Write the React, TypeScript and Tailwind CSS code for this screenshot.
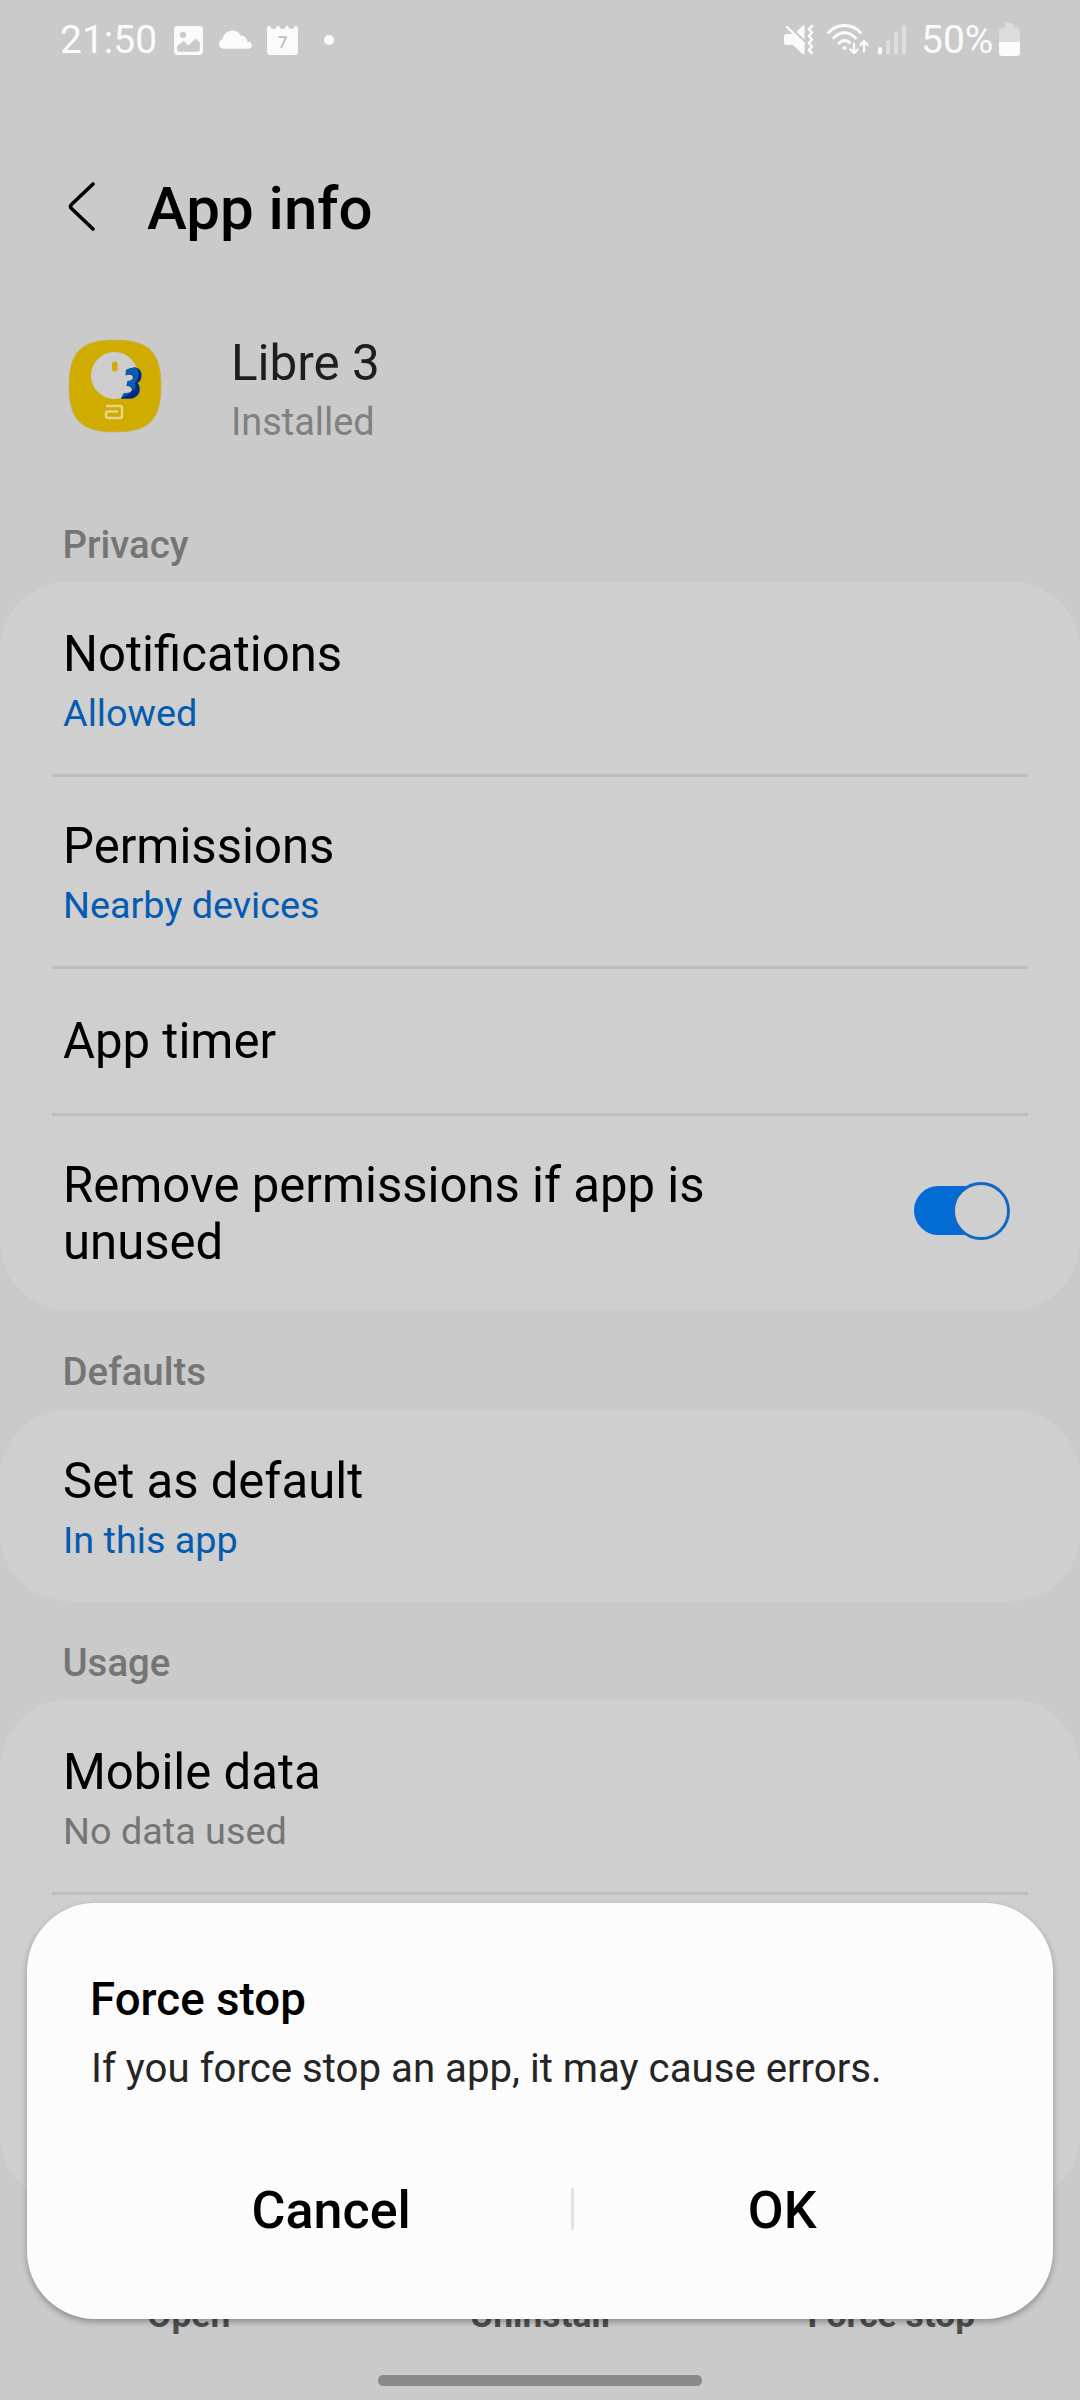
import type { ReactNode } from "react";

function StatusBar() {
  return (
    <div className="flex h-20 items-start text-[39px] leading-[46px] text-[#fbfbfb]">
      <span className="mt-[17px] w-[114px] pl-[60px]">21:50</span>
      <svg className="ml-[60px] mt-[26px] h-[29px] w-[29px] shrink-0" viewBox="0 0 29 29" fill="#fbfbfb">
        <path
          fillRule="evenodd"
          d="M4 0H25a4 4 0 0 1 4 4V25a4 4 0 0 1-4 4H4a4 4 0 0 1-4-4V4a4 4 0 0 1 4-4ZM3.2 20V24a1.8 1.8 0 0 0 1.8 1.8H24a1.8 1.8 0 0 0 1.8-1.8V16.500L21.500 12.500L14.500 19.500L9.500 15Z M9 5.700a3.200 3.200 0 1 0 .01 0Z"
        />
      </svg>
      <svg className="ml-[15px] mt-[30px] h-[19px] w-[35px] shrink-0" viewBox="0 0 35 19" fill="#fbfbfb">
        <path d="M5.500 18.700A5 5 0 0 1 4.700 8.900A9.700 9.700 0 0 1 22.800 5.500Q28.500 5.500 29.800 12A3.400 3.400 0 0 1 31 18.700Z" />
      </svg>
      <svg className="ml-[14px] mt-[25px] h-[30px] w-[31px] shrink-0" viewBox="0 0 31 30">
        <path
          fill="#fbfbfb"
          d="M0 3Q0 1 2 1H3Q4 4 6.500 4Q9 4 10 1H12Q13 4 15.500 4Q18 4 19 1H21Q22 4 24.500 4Q27 4 28 1H29Q31 1 31 3V27Q31 30 28 30H3Q0 30 0 27Z"
        />
        <path d="M11.500 12.200H19L14 23" fill="none" stroke="#bdbdbd" strokeWidth="1.800" />
      </svg>
      <span className="ml-[26px] mt-[35px] h-[10px] w-[10px] shrink-0 rounded-full bg-[#fbfbfb]" />

      <svg className="ml-[450px] mt-[24px] h-[31px] w-[30px] shrink-0" viewBox="0 0 30 31" fill="#fbfbfb">
        <path d="M0 12.500Q0 10 2.500 10H8.500L20.500 20V29.500Q19 30.500 17.500 29L9 21H2.500Q0 21 0 18.500Z" />
        <path d="M12.500 8L19 1.500Q20.500 0.500 20.500 2.500V15.500Z" />
        <path d="M3 3L20 19.500" stroke="#fbfbfb" strokeWidth="2.400" strokeLinecap="round" />
        <path
          d="M28 2L24.800 5.200L28 8.500L24.800 12L28 15.500L24.800 19L28 22.500L24.800 26L28 29"
          fill="none"
          stroke="#fbfbfb"
          strokeWidth="2.500"
          strokeLinecap="round"
          strokeLinejoin="round"
        />
      </svg>
      <svg
        className="ml-[13px] mt-[23px] h-8 w-[42px] shrink-0"
        viewBox="0 0 42 32"
        fill="none"
        stroke="#fbfbfb"
        strokeWidth="3"
        strokeLinecap="round"
        strokeLinejoin="round"
      >
        <path d="M1.700 9.500Q8 2.500 17.500 2.500T33.500 9.500" />
        <path d="M6.700 15Q11.500 9.800 17.500 9.800T28.500 15" />
        <path d="M12 20.500Q14 17.500 17.500 17.500Q20.500 17.500 22.500 19.500" />
        <circle cx="17.500" cy="25" r="2" fill="#fbfbfb" stroke="none" />
        <path d="M27 21V30M23.300 26.500L27 30.200L30.700 26.500M37 28.500V18.500M33.300 22L37 18.300L40.700 22" strokeWidth="2.300" />
      </svg>
      <svg className="ml-[9px] mt-[25px] h-[30px] w-7 shrink-0" viewBox="0 0 28 30">
        <rect y="22" width="4" height="7.500" rx="1.800" fill="#fbfbfb" />
        <rect x="8" y="15" width="4" height="14.500" rx="1.800" fill="#dedede" />
        <rect x="16" y="7" width="4" height="22.500" rx="1.800" fill="#dedede" />
        <rect x="24" y="0" width="4" height="29.500" rx="1.800" fill="#dedede" />
      </svg>
      <span className="ml-[15px] mt-[17px] w-[74px]">50%</span>
      <svg className="ml-[4px] mt-[23px] h-[33px] w-[21px] shrink-0" viewBox="0 0 21 33">
        <path d="M6 4V1.500Q6 0 7.500 0H13.500Q15 0 15 1.500V4Q21 5 21 8V19H0V8Q0 5 6 4Z" fill="#dcdcdc" />
        <path d="M0 19H21V29.500Q21 33 17.500 33H3.500Q0 33 0 29.500Z" fill="#fcfcfc" />
      </svg>
    </div>
  );
}

function LibreIcon() {
  return (
    <svg className="h-[94px] w-[94px] shrink-0" viewBox="0 0 94 94">
      <path
        d="M47 1C81 1 93 13 93 47S81 93 47 93S1 81 1 47S13 1 47 1Z"
        fill="#d0ab00"
        stroke="#c5b15a"
        strokeWidth="0.800"
      />
      <circle cx="46.500" cy="36.500" r="23.500" fill="#cdcdcd" />
      <rect x="44" y="22.500" width="5.500" height="10" rx="2.700" fill="#d0ab00" />
      <path
        d="M58 31Q63 28 67.500 28.500Q74 30 73.500 37Q73 42.500 69.500 44Q72.500 47 71.500 53Q69 60 60 59.800H53L56 54Z"
        fill="#002c7c"
      />
      <path
        d="M58 31Q63 28 67.500 28.500Q71 30 70.500 36Q70 42 66.500 44.500Q69.500 47 66 51Q60 56.500 53 59L56 54Q64 54.500 65 50.500Q65 47.500 59 47.500L60 41.500Q65.500 41 65.800 37.500Q65.500 34 58 36.500Z"
        fill="#0a5cad"
      />
      <path
        d="M56 54Q63.500 54.500 64 50.500Q63.500 47 58.500 47L59.500 42Q65 41.500 65 38Q64.500 34.500 57 36.500L50 46Z"
        fill="#cdcdcd"
      />
      <path
        d="M38 67H52Q54 67 54 69V77Q54 79 52 79H40Q38 79 38 77V74.500Q38 72.500 40 72.500H50"
        fill="none"
        stroke="#e6d48a"
        strokeWidth="2.500"
      />
    </svg>
  );
}

function Section({ title, children }: { title: string; children: ReactNode }) {
  return (
    <section>
      <h2 className="pb-[15px] pl-[62.5px] pt-10 text-[38.4px] font-medium leading-[44px] text-[#757575]">{title}</h2>
      <div className="rounded-[68px] bg-[#cfcfcf]">{children}</div>
    </section>
  );
}

function Row({ title, sub, subClass }: { title: string; sub: string; subClass: string }) {
  return (
    <div className="h-48 pl-[63px] pt-[43px]">
      <p className="text-[49.1px] leading-[58px] text-black">{title}</p>
      <p className={`mt-[8px] text-[37.8px] leading-[44px] ${subClass}`}>{sub}</p>
    </div>
  );
}

function Divider() {
  return <div className="mx-[52px] -mb-[3px] h-[3px] bg-[#bdbdbd]" />;
}

function Toggle() {
  return (
    <svg className="-mt-[7px] h-[60px] w-[98px]" viewBox="0 0 98 60">
      <rect x="1" y="5" width="80" height="49" rx="24.500" fill="#036bd4" />
      <circle cx="68" cy="30" r="27.500" fill="#cfcfcf" stroke="#1169c6" strokeWidth="3" />
    </svg>
  );
}

function ForceStopDialog() {
  return (
    <div
      role="dialog"
      className="absolute left-[27px] top-[1903px] h-[416px] w-[1026px] rounded-[68px] bg-[#fcfcfc] px-[63px] pt-[70px] shadow-[0_3px_6px_rgba(0,0,0,0.3)]"
    >
      <h3 className="text-[45.7px] font-medium leading-[54px] text-black">Force stop</h3>
      <p className="mt-[18px] pl-px text-[40.2px] leading-[48px] text-[#252525]">
        If you force stop an app, it may cause errors.
      </p>
      <div className="mt-[80px] flex h-[76px] items-center pl-px text-[52px] font-medium leading-[60px] text-black">
        <button className="w-[482px]">Cancel</button>
        <span className="-mt-[5px] h-[42px] w-[3px] bg-[#e4e4e4]" />
        <button className="w-[417px]">OK</button>
      </div>
    </div>
  );
}

export default function App() {
  const blue = "text-[#045bb0]";
  return (
    <div className="relative flex h-[2400px] w-[1080px] flex-col overflow-hidden bg-[#cacaca] font-[Roboto,sans-serif]">
      <StatusBar />
      <header className="flex h-[254px] items-start pt-[93px]">
        <svg
          className="ml-[68px] mt-[7px] h-[54px] w-8 shrink-0"
          viewBox="0 0 32 54"
          fill="none"
          stroke="#000"
          strokeWidth="3.600"
          strokeLinecap="round"
          strokeLinejoin="round"
        >
          <path d="M25 4L3.500 24.500Q1.500 26.500 3.500 28.500L25 49" />
        </svg>
        <h1 className="ml-[47px] text-[60px] font-medium leading-[72px] text-black">App info</h1>
      </header>
      <div className="flex h-[149px] items-start pl-[68px]">
        <span className="mt-[5px]">
          <LibreIcon />
        </span>
        <div className="ml-[69px]">
          <p className="text-[49.4px] leading-[58px] text-[#1e1e1e]">Libre 3</p>
          <p className="mt-[8px] text-[37.9px] leading-[44px] text-[#808080]">Installed</p>
        </div>
      </div>

      <Section title="Privacy">
        <Row title="Notifications" sub="Allowed" subClass={blue} />
        <Divider />
        <Row title="Permissions" sub="Nearby devices" subClass={blue} />
        <Divider />
        <div className="flex h-[147px] items-center pl-[63px] pt-[3px] text-[49.1px] leading-[58px] text-black">
          App timer
        </div>
        <Divider />
        <div className="flex h-[197px] items-center justify-between pl-[63px] pr-[69px] pt-[5px]">
          <p className="w-[700px] text-[49.1px] leading-[57px] text-black">Remove permissions if app is unused</p>
          <Toggle />
        </div>
      </Section>
      <Section title="Defaults">
        <Row title="Set as default" sub="In this app" subClass={blue} />
      </Section>
      <Section title="Usage">
        <Row title="Mobile data" sub="No data used" subClass="text-[#757575]" />
        <Divider />
        <div className="h-[311px]" />
      </Section>

      <nav className="mt-[90px] flex h-11 shrink-0 px-[13px] text-center text-[35.4px] font-bold leading-[44px] text-[#4f4f4f]">
        <span className="flex-1">Open</span>
        <span className="flex-1">Uninstall</span>
        <span className="flex-1">Force stop</span>
      </nav>
      <div className="mx-auto mt-[38px] h-[11px] w-[324px] shrink-0 rounded-[5px] bg-[#8a8a8a]" />
      <ForceStopDialog />
    </div>
  );
}
